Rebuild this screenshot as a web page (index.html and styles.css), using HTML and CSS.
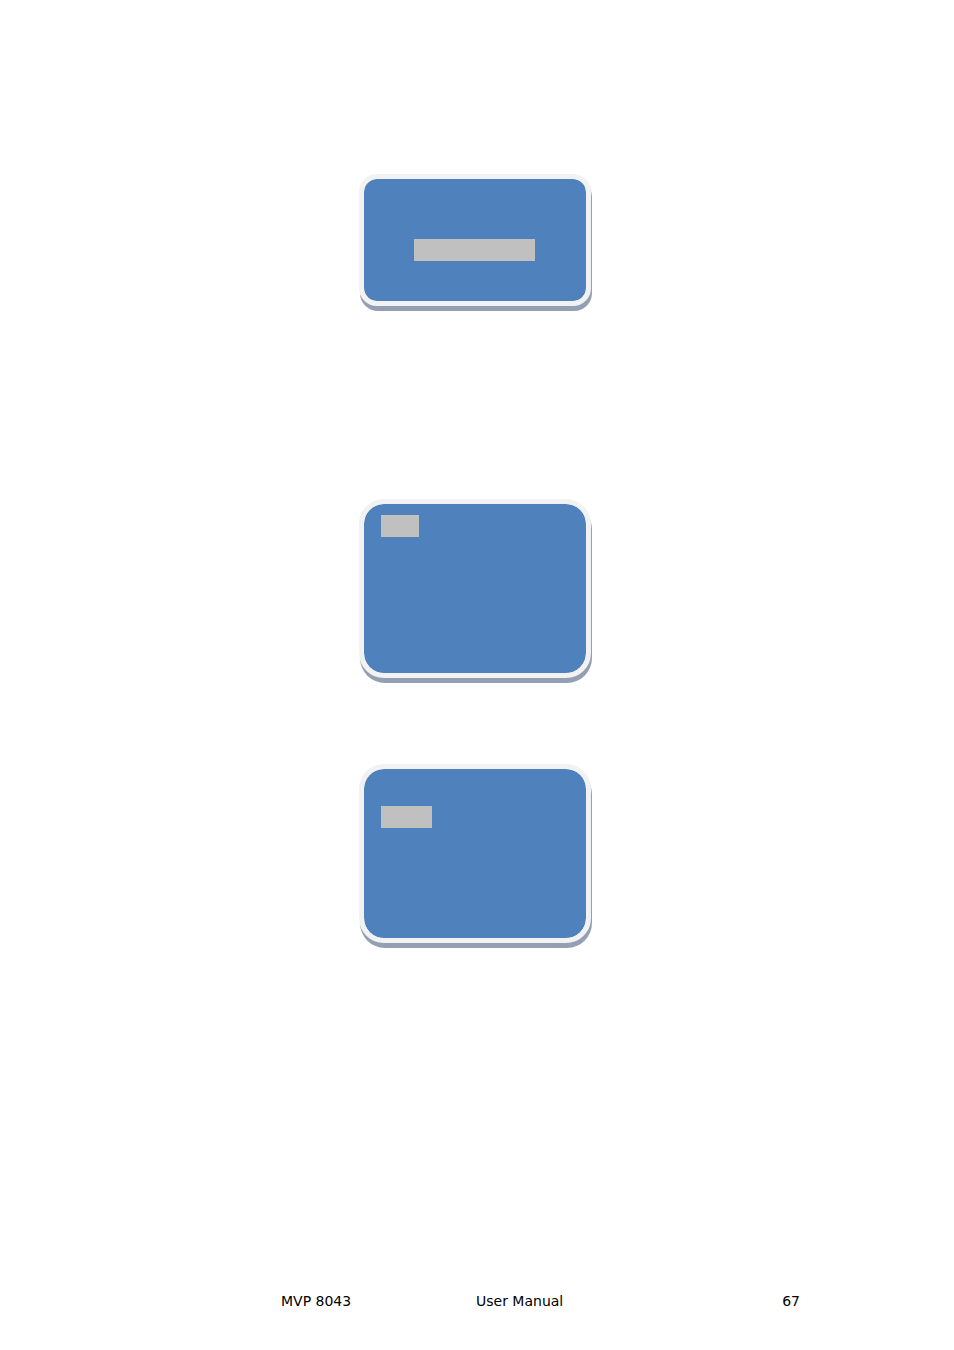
FILE: index.html
```html
<!DOCTYPE html>
<html lang="en">
<head>
    <meta charset="UTF-8">
    <title>MVP 8043 User Manual</title>
    <link rel="stylesheet" href="styles.css">
</head>
<body>
    <main class="screens">
        <div class="screen screen-short">
            <div class="highlight highlight-wide"></div>
        </div>
        <div class="screen screen-tall">
            <div class="highlight highlight-first"></div>
        </div>
        <div class="screen screen-tall">
            <div class="highlight highlight-second"></div>
        </div>
    </main>

    <footer class="page-footer">
        <span>MVP 8043</span>
        <span>User Manual</span>
        <span class="page-number">67</span>
    </footer>
</body>
</html>
```
FILE: styles.css
```css
body {
    display: flex;
    flex-direction: column;
    min-height: 100vh;
    margin: 0;
    background-color: #fff;
    color: #000;
    font-family: Verdana, "DejaVu Sans", sans-serif;
    font-size: 14px;
    line-height: 18px;
}

.screens {
    display: flex;
    flex-direction: column;
    align-items: center;
    flex: 1;
    padding: 174px 154px 0 150px;
}

.screen {
    box-sizing: border-box;
    width: 232px;
    border: 5px solid #f2f2f2;
    background-color: #4f81bd;
    background-clip: padding-box;
    box-shadow: 1px 5px 0 #93a0b4;
}

.screen-short {
    height: 132px;
    margin-bottom: 193px;
    padding: 60px 50px;
    border-radius: 18px;
}

.screen-tall {
    height: 179px;
    margin-bottom: 86px;
    padding: 11px 17px;
    border-radius: 25px;
}

/* selected menu line */
.highlight {
    height: 22px;
    background-color: #c0c0c0;
}

.highlight-wide {
    width: 121px;
}

.highlight-first {
    width: 38px;
}

.highlight-second {
    width: 51px;
    margin-top: 26px;
}

.page-footer {
    display: grid;
    grid-template-columns: 195px auto 1fr;
    padding: 0 154px 40px 281px;
}

.page-number {
    text-align: right;
}
```
